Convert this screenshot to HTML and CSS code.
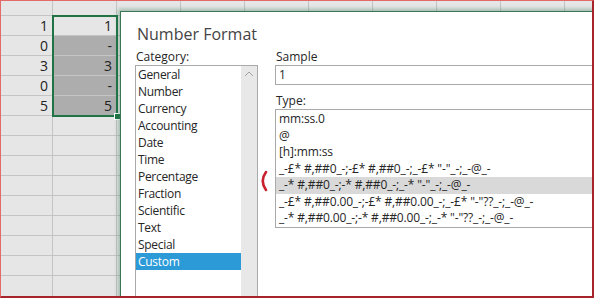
FILE: index.html
```html
<!DOCTYPE html>
<html lang="en">
<head>
  <meta charset="UTF-8" />
  <title>Number Format</title>
  <link rel="stylesheet" href="styles.css">
</head>
<body>
  <div class="frame">

    <div class="sheet">
      <div class="cells">
        <div class="row"><div class="cell col-a">1</div><div class="cell col-b">1</div></div>
        <div class="row"><div class="cell col-a">0</div><div class="cell col-b filled">-</div></div>
        <div class="row"><div class="cell col-a">3</div><div class="cell col-b filled">3</div></div>
        <div class="row"><div class="cell col-a">0</div><div class="cell col-b filled">-</div></div>
        <div class="row"><div class="cell col-a">5</div><div class="cell col-b filled">5</div></div>
      </div>
      <div class="selection"><span class="handle"></span></div>
    </div>

    <div class="dialog">
      <h1 class="title">Number Format</h1>
      <div class="body">
        <div class="category">
          <div class="label">Category:</div>
          <div class="listbox">
            <ul class="items">
              <li>General</li>
              <li>Number</li>
              <li>Currency</li>
              <li>Accounting</li>
              <li>Date</li>
              <li>Time</li>
              <li>Percentage</li>
              <li>Fraction</li>
              <li>Scientific</li>
              <li>Text</li>
              <li>Special</li>
              <li class="selected">Custom</li>
            </ul>
            <div class="scrollbar">
              <svg width="16" height="16" viewBox="0 0 16 16"><polyline points="4,10 8,6 12,10" fill="none" stroke="#a2a2a2" stroke-width="1"/></svg>
            </div>
          </div>
        </div>

        <div class="details">
          <div class="label">Sample</div>
          <div class="sample">1</div>
          <div class="label">Type:</div>
          <ul class="types">
            <li>mm:ss.0</li>
            <li>@</li>
            <li>[h]:mm:ss</li>
            <li>_-£* #,##0_-;-£* #,##0_-;_-£* "-"_-;_-@_-</li>
            <li class="selected">_-* #,##0_-;-* #,##0_-;_-* "-"_-;_-@_-</li>
            <li>_-£* #,##0.00_-;-£* #,##0.00_-;_-£* "-"??_-;_-@_-</li>
            <li>_-* #,##0.00_-;-* #,##0.00_-;_-* "-"??_-;_-@_-</li>
          </ul>
        </div>
      </div>

      <svg class="mark" width="10" height="22" viewBox="0 0 10 22">
        <path d="M7 2 Q0.5 11 7 20" fill="none" stroke="#c8202c" stroke-width="2.6" stroke-linecap="round"/>
      </svg>
    </div>

  </div>
</body>
</html>
```

FILE: styles.css
```css
body {
  margin: 0;
  background: #fff;
}
.frame {
  position: relative;
  width: 594px;
  height: 298px;
  overflow: hidden;
  font-family: "Open Sans", "Noto Sans", sans-serif;
  color: #262626;
}
.frame::after {
  content: "";
  position: absolute;
  inset: 0;
  border-top: 1px solid #e46a6a;
  border-left: 1px solid #e46a6a;
  border-right: 2px solid #a8232a;
  border-bottom: 2px solid #a8232a;
  pointer-events: none;
}

/* spreadsheet behind the dialog */
.sheet {
  position: relative;
  height: 100%;
  background-color: #e6e6e6;
  background-image:
    repeating-linear-gradient(to right, transparent 0 63px, #c4c4c4 63px 64px),
    repeating-linear-gradient(to bottom, transparent 0 19px, #c4c4c4 19px 20px);
  background-position: -11px 0, 0 -4px;
}
.cells {
  padding-top: 16px;
}
.row {
  display: flex;
  gap: 1px;
  height: 20px;
}
.cell {
  height: 19px;
  box-sizing: border-box;
  padding-right: 4px;
  text-align: right;
  font-size: 14px;
  line-height: 19px;
  color: #222;
}
.col-a {
  width: 52px;
}
.col-b {
  width: 63px;
}
.filled {
  background: #adadad;
}
.selection {
  position: absolute;
  left: 52px;
  top: 15px;
  width: 66px;
  height: 102px;
  box-sizing: border-box;
  border: 2px solid #217346;
}
.handle {
  position: absolute;
  right: -5px;
  bottom: -5px;
  width: 5px;
  height: 5px;
  background: #217346;
  border: 1px solid #fff;
}

/* dialog */
.dialog {
  position: absolute;
  left: 120px;
  top: 11px;
  width: 520px;
  height: 320px;
  background: #fff;
  border-left: 1px solid #3a7555;
  border-top: 1px solid #3a7555;
  box-shadow: 0 0 4px 2px rgba(33, 115, 70, 0.35);
  padding: 12px 0 0 14px;
  box-sizing: border-box;
}
.title {
  margin: 0 0 5px 2px;
  font-size: 16px;
  font-weight: normal;
  line-height: 20px;
  color: #444;
}
.body {
  display: flex;
  gap: 17px;
}
.label {
  font-size: 12px;
  line-height: 16px;
  padding-left: 1px;
}
.listbox {
  display: flex;
  width: 123px;
  height: 260px;
  box-sizing: border-box;
  border: 1px solid #a9a9a9;
}
.items {
  list-style: none;
  margin: 0;
  padding: 0;
  width: 105px;
}
.items li {
  height: 17px;
  line-height: 17px;
  font-size: 12px;
  letter-spacing: -0.3px;
  padding-left: 2px;
}
.items .selected {
  background: #2b9ad6;
  color: #fff;
}
.scrollbar {
  width: 16px;
  background: #e8e8e8;
}
.scrollbar svg {
  display: block;
}
.details {
  flex: 1;
}
.sample {
  height: 20px;
  box-sizing: border-box;
  border: 1px solid #a9a9a9;
  font-size: 12px;
  line-height: 18px;
  padding-left: 3px;
  margin-bottom: 8px;
}
.types {
  list-style: none;
  margin: 0;
  padding: 1px 0 0;
  border: 1px solid #a9a9a9;
}
.types li {
  height: 16.5px;
  line-height: 16.5px;
  font-size: 12px;
  letter-spacing: -0.15px;
  padding-left: 3px;
  white-space: nowrap;
}
.types .selected {
  background: #d9d9d9;
}
.mark {
  position: absolute;
  left: 138px;
  top: 158px;
}
```
